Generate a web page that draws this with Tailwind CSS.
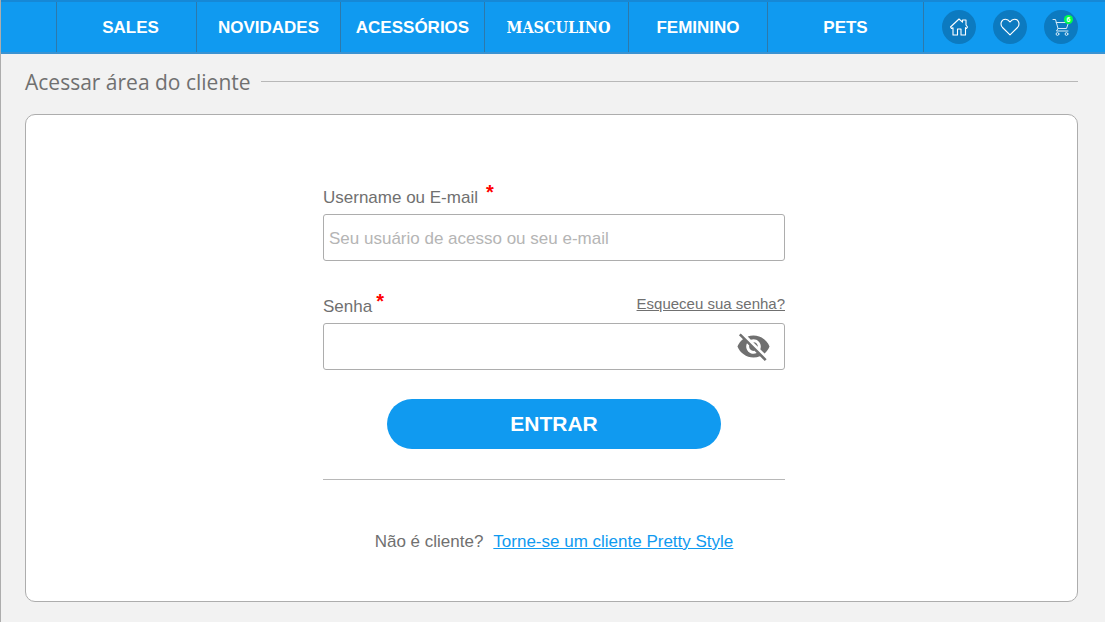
<!DOCTYPE html>
<html lang="pt-BR">
<head>
<meta charset="utf-8">
<meta name="viewport" content="width=device-width, initial-scale=1">
<title>Pretty Style - Área do cliente</title>
<script src="https://cdn.jsdelivr.net/npm/@tailwindcss/browser@4"></script>
</head>
<body class="flex min-h-screen flex-col border-l border-[#adadad] bg-[#f2f2f2] font-['Liberation_Sans',Arial,sans-serif] text-[17px] text-[#707070]">
<header class="-ml-px flex h-[54px] border-t-2 border-b-2 border-t-[#1688d6] border-b-[#3a93d2] bg-[#109af0] text-[17px] font-bold text-white">
  <nav class="ml-[56px] grid flex-1 grid-cols-[140fr_144fr_144fr_144fr_139fr_156fr] border-l border-[#2d79ab]">
    <a href="#" class="flex items-center justify-center border-r border-[#2d79ab] pt-0.5 pl-2">SALES</a>
    <a href="#" class="flex items-center justify-center border-r border-[#2d79ab] pt-0.5">NOVIDADES</a>
    <a href="#" class="flex items-center justify-center border-r border-[#2d79ab] pt-0.5">ACESSÓRIOS</a>
    <a href="#" class="flex items-center justify-center border-r border-[#2d79ab] pt-0.5 pl-1 font-['DejaVu_Serif_Condensed','DejaVu_Serif',serif] text-[16px]">MASCULINO</a>
    <a href="#" class="flex items-center justify-center border-r border-[#2d79ab] pt-0.5">FEMININO</a>
    <a href="#" class="flex items-center justify-center border-r border-[#2d79ab] pt-0.5">PETS</a>
  </nav>
  <div class="flex items-center gap-[17px] pr-[27px] pl-[18px]">
    <a href="#" aria-label="Início" class="flex size-[34px] items-center justify-center rounded-full bg-[#0c7ac0]">
      <svg class="size-5" viewBox="0 0 20 20" fill="none" stroke="#fff" stroke-width="1.1" stroke-linejoin="round" aria-hidden="true"><path d="M1.500 10 10 2l3.500 3.200V3H17v5l1.500 2-1 1.500-1-.8v7.300H12v-6H8.500v6H4V10.700l-1.500.8z"/></svg>
    </a>
    <a href="#" aria-label="Favoritos" class="flex size-[34px] items-center justify-center rounded-full bg-[#0c7ac0]">
      <svg class="size-5" viewBox="0 0 20 20" fill="none" stroke="#fff" stroke-width="1.1" stroke-linejoin="round" aria-hidden="true"><path d="M10 17.800 2.500 10.500C-.5 7 1.500 2.200 5.500 2.200c2.200 0 3.500 1.300 4.500 2.800 1-1.500 2.300-2.800 4.500-2.800 4 0 6 4.800 3 8.300z"/></svg>
    </a>
    <a href="#" aria-label="Carrinho" class="relative flex size-[34px] items-center justify-center rounded-full bg-[#0c7ac0]">
      <svg class="size-5" viewBox="0 0 20 20" fill="none" stroke="#d5ebf8" stroke-width="1" stroke-linecap="round" stroke-linejoin="round" aria-hidden="true"><path d="M2 2.500h2.500l2.500 9h8.500l2-6H5.200M7 11.500l-1.500 2.500h11.500"/><circle cx="6.500" cy="17" r="1.400"/><circle cx="15.500" cy="17" r="1.400"/></svg>
      <span class="absolute top-[5px] right-[5px] flex size-[9px] items-center justify-center rounded-full bg-[#00ff48] text-[7px] leading-none">6</span>
    </a>
  </div>
</header>
<main class="flex flex-1 flex-col pt-3 pr-[27px] pb-5 pl-6">
  <div class="flex items-center gap-2.5">
    <h1 class="font-['Open_Sans','Noto_Sans',sans-serif] text-[21px] leading-8">Acessar área do cliente</h1>
    <hr class="mb-0.5 flex-1 border-[#b8b8b8]">
  </div>
  <section class="mt-4 flex flex-1 justify-center rounded-[10px] border border-[#adadad] bg-white pt-[73px] pl-[5px]">
    <form class="flex w-[462px] flex-col">
      <label for="user" class="flex h-[26px] gap-2 leading-5">Username ou E-mail <span class="-mt-1.5 text-[20px] font-bold text-[#ff0000]" aria-hidden="true">*</span></label>
      <input id="user" type="text" placeholder="Seu usuário de acesso ou seu e-mail" class="h-[47px] rounded-[3px] border border-[#adadad] bg-white px-[5px] pt-0.5 placeholder:text-[#b5b5b5]">
      <div class="mt-9 flex h-[26px] justify-between">
        <label for="password" class="flex gap-1 leading-5">Senha<span class="-mt-1.5 text-[20px] font-bold text-[#ff0000]" aria-hidden="true">*</span></label>
        <a href="#" class="text-[15px] leading-[14px] underline">Esqueceu sua senha?</a>
      </div>
      <div class="flex h-[47px] items-center rounded-[3px] border border-[#adadad] pr-[13px]">
        <input id="password" type="password" class="h-full min-w-0 flex-1 px-[5px] outline-none">
        <button type="button" aria-label="Mostrar senha">
          <svg class="size-[35px]" viewBox="0 0 24 24" fill="#707070" aria-hidden="true"><path d="M12 7c2.760 0 5 2.240 5 5 0 .650-.130 1.260-.360 1.830l2.920 2.920c1.510-1.260 2.700-2.890 3.430-4.750-1.730-4.390-6-7.500-11-7.500-1.400 0-2.740.250-3.980.700l2.160 2.160C10.740 7.130 11.350 7 12 7zM2 4.270l2.280 2.280.460.460C3.080 8.300 1.780 10.020 1 12c1.730 4.390 6 7.500 11 7.500 1.550 0 3.030-.300 4.380-.840l.420.420L19.730 22 21 20.730 3.270 3 2 4.270zM7.530 9.800l1.550 1.550c-.050.210-.080.430-.080.650 0 1.660 1.340 3 3 3 .220 0 .440-.030.650-.080l1.550 1.550c-.670.330-1.410.530-2.200.530-2.760 0-5-2.240-5-5 0-.790.200-1.530.530-2.200zm4.310-.780 3.150 3.150.020-.160c0-1.660-1.340-3-3-3l-.170.010z"/></svg>
        </button>
      </div>
      <button type="submit" class="mt-[29px] h-[50px] w-[334px] self-center rounded-full bg-[#109af0] text-[21px] font-bold text-white">ENTRAR</button>
      <hr class="mt-[30px] border-[#b8b8b8]">
      <p class="mt-[52px] flex justify-center gap-2.5 leading-5">Não é cliente? <a href="#" class="text-[#109af0] underline">Torne-se um cliente Pretty Style</a></p>
    </form>
  </section>
</main>
</body>
</html>
